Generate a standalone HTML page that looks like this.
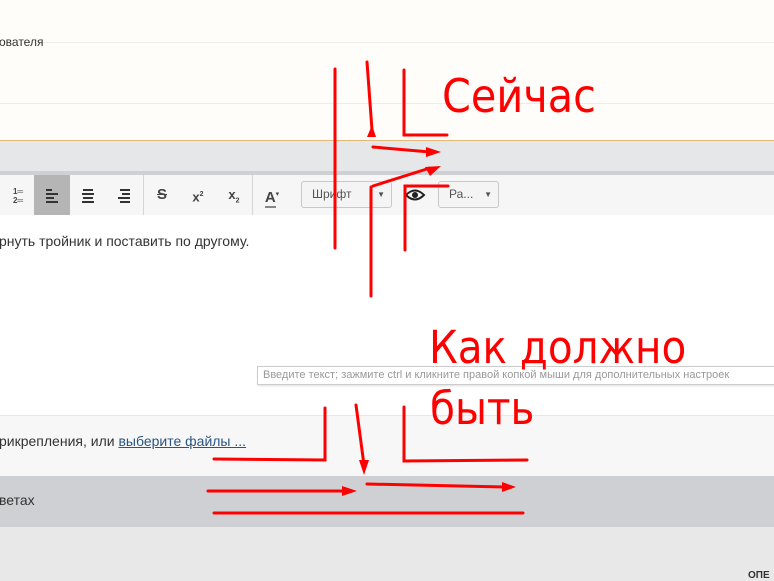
<!DOCTYPE html>
<html><head><meta charset="utf-8"><style>
*{margin:0;padding:0;box-sizing:border-box}
body{width:774px;height:578px;overflow:hidden;position:relative;font-family:"Liberation Sans","DejaVu Sans",sans-serif;background:#e8e8e9}
.a{position:absolute}
.t{font-size:13px;color:#333;white-space:nowrap}
.ico{position:absolute;top:175px;height:40px;width:36px;text-align:center;line-height:40px;font-size:13px;font-weight:bold;color:#444}
</style></head><body>
<div class="a" style="left:0;top:0;width:774px;height:141px;background:#fffdf9;border-bottom:1px solid #e2b97a"></div>
<div class="a" style="left:38px;top:42px;width:736px;height:1px;background:#eeece8"></div>
<div class="a" style="left:0;top:103px;width:774px;height:1px;background:#eeece8"></div>
<div class="a t" style="left:-1px;top:35px;font-size:12px">ователя</div>
<div class="a" style="left:0;top:141px;width:774px;height:30px;background:#e6e7e9"></div>
<div class="a" style="left:0;top:171px;width:774px;height:4px;background:#cfd0d4"></div>
<div class="a" style="left:0;top:175px;width:774px;height:40px;background:#f6f6f6"></div>
<div class="a" style="left:34px;top:175px;width:36px;height:40px;background:#b5b5b5"></div>
<div class="a" style="left:143px;top:175px;width:1px;height:40px;background:#d5d5d5"></div>
<div class="a" style="left:252px;top:175px;width:1px;height:40px;background:#d5d5d5"></div>
<div class="ico" style="left:0;font-size:8px;line-height:9px;padding-top:12px">1═<br>2═</div>
<div class="ico" style="left:144px;text-decoration:line-through;font-size:15px">S</div>
<div class="ico" style="left:180px">x<sup style="font-size:7px">2</sup></div>
<div class="ico" style="left:216px">x<sub style="font-size:7px">2</sub></div>
<div class="ico" style="left:254px;font-size:15px"><span style="border-bottom:2px solid #888">A</span><sup style="font-size:7px">▾</sup></div>
<div class="a" style="left:301px;top:181px;width:91px;height:27px;border:1px solid #c8c8c8;border-radius:3px;background:#f4f4f4;font-size:12px;color:#555;line-height:25px;padding-left:10px">Шрифт<span style="position:absolute;right:6px;font-size:8px">▼</span></div>
<div class="a" style="left:438px;top:181px;width:61px;height:27px;border:1px solid #c8c8c8;border-radius:3px;background:#f4f4f4;font-size:12px;color:#555;line-height:25px;padding-left:10px">Ра...<span style="position:absolute;right:6px;font-size:8px">▼</span></div>
<div class="a" style="left:0;top:215px;width:774px;height:200px;background:#fff"></div>
<div class="a t" style="left:-1px;top:233px;font-size:14px">рнуть тройник и поставить по другому.</div>
<div class="a" style="left:257px;top:366px;width:520px;height:19px;border:1px solid #ccc;background:#fff;font-size:11px;color:#999;line-height:17px;padding-left:5px;white-space:nowrap;box-shadow:1px 1px 2px #ddd">Введите текст; зажмите ctrl и кликните правой копкой мыши для дополнительных настроек</div>
<div class="a" style="left:0;top:415px;width:774px;height:61px;background:#f7f7f7;border-top:1px solid #e8e8e8"></div>
<div class="a t" style="left:-1px;top:433px;font-size:14px">рикрепления, или <span style="color:#2a5580;text-decoration:underline">выберите файлы ...</span></div>
<div class="a" style="left:0;top:476px;width:774px;height:51px;background:#cfd0d4"></div>
<div class="a t" style="left:-1px;top:492px;font-size:14px">ветах</div>
<div class="a" style="left:748px;top:570px;font-size:10px;font-weight:bold;color:#333">ОПЕ</div>
<svg class="a" style="left:0;top:0" width="774" height="578">
<g stroke="#333" stroke-width="2">
<path d="M46 190h6M46 194h12M46 198h8M46 202h12"/>
<path d="M83 190h10M82 194h12M83 198h10M82 202h12"/>
<path d="M120 190h10M122 194h8M118 198h12M120 202h10"/>
</g>
<path d="M406 195q9-9 18 0q-9 9-18 0z" fill="none" stroke="#222" stroke-width="2"/><circle cx="415" cy="195" r="3" fill="#222"/>
<g stroke="#f00" stroke-width="3" fill="none" stroke-linecap="round">
<path d="M335 69V248"/><path d="M367 62L372 130"/><path d="M404 70V135H447"/>
<path d="M373 147L430 152"/><path d="M373 186L430 168"/><path d="M371 187V296"/>
<path d="M405 250V186H448"/>
<path d="M325 408V460L214 459"/><path d="M356 405L364 465"/><path d="M404 407V461L527 460"/>
<path d="M367 484L505 487"/><path d="M208 491L345 491"/><path d="M214 513L523 513"/>
</g>
<g fill="#f00"><path d="M367 137L372 125L376 137Z"/><path d="M441 152L426 147L426 157Z"/><path d="M441 166L425 167L430 176Z"/>
<path d="M364 475L359 460L369 460Z"/><path d="M516 487L502 482L502 492Z"/><path d="M357 491L342 486L342 496Z"/></g>
<text x="442" y="112" font-family="DejaVu Sans Condensed,DejaVu Sans,sans-serif" font-size="46" fill="#f00">Сейчас</text>
<text x="429" y="363" font-family="DejaVu Sans Condensed,DejaVu Sans,sans-serif" font-size="45" fill="#f00">Как должно</text>
<text x="430" y="424" font-family="DejaVu Sans Condensed,DejaVu Sans,sans-serif" font-size="45" fill="#f00">быть</text>
</svg>
</body></html>
